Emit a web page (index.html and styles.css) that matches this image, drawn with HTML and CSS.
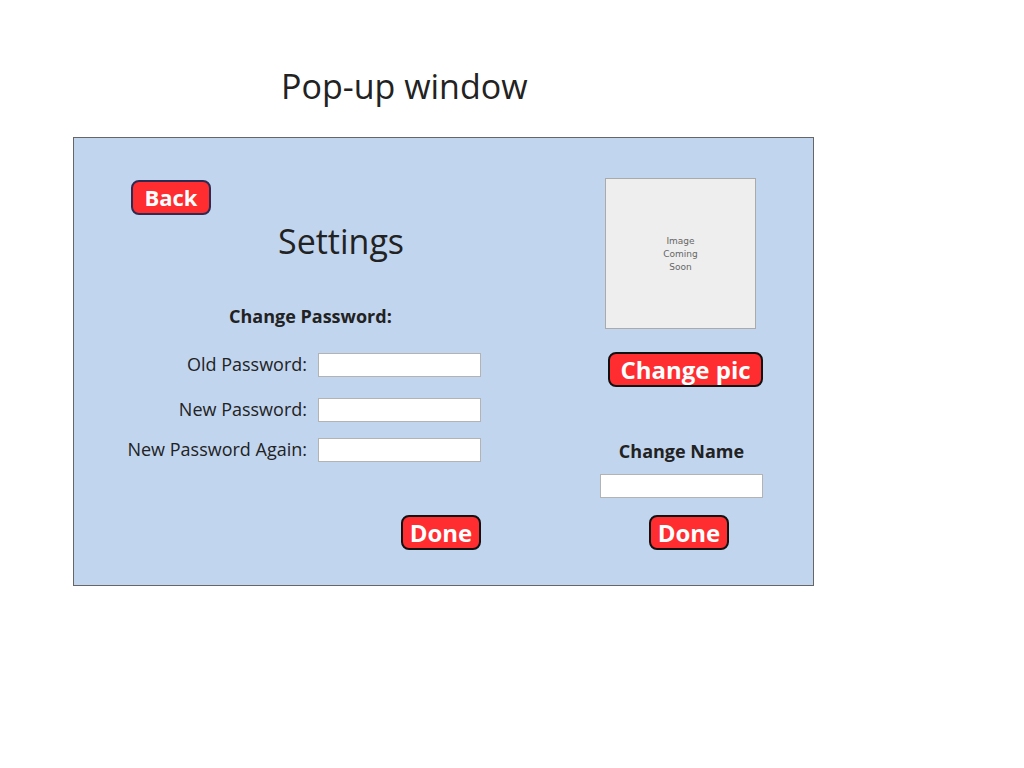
FILE: index.html
```html
<!DOCTYPE html>
<html>
<head>
<meta charset="utf-8">
<title>Pop-up window</title>
<link rel="stylesheet" href="styles.css">
</head>
<body>
<div class="page">
  <h1 class="page-title">Pop-up window</h1>
  <div class="popup">
    <div class="col-left">
      <button class="btn btn-back">Back</button>
      <h2 class="settings-title">Settings</h2>
      <div class="section-label pw-label">Change Password:</div>
      <div class="form">
        <div class="form-row row1">
          <label class="field-label">Old Password:</label>
          <input class="field" type="text">
        </div>
        <div class="form-row row2">
          <label class="field-label">New Password:</label>
          <input class="field" type="text">
        </div>
        <div class="form-row row3">
          <label class="field-label">New Password Again:</label>
          <input class="field" type="text">
        </div>
      </div>
      <button class="btn btn-done done-left">Done</button>
    </div>
    <div class="col-right">
      <div class="image-box"><span>Image<br>Coming<br>Soon</span></div>
      <button class="btn btn-pic">Change pic</button>
      <div class="section-label name-label">Change Name</div>
      <input class="field name-field" type="text">
      <button class="btn btn-done done-right">Done</button>
    </div>
  </div>
</div>
</body>
</html>
```
FILE: styles.css
```css
* { box-sizing: border-box; }
html, body { margin: 0; padding: 0; background: #fff; }
body {
  font-family: "Open Sans", "Liberation Sans", sans-serif;
  color: #222;
}
.page {
  padding-left: 73px;
  padding-top: 66px;
}
.page-title {
  margin: 0 0 31px 208px;
  font-size: 34px;
  font-weight: 400;
  line-height: 40px;
  color: #222;
}
.popup {
  width: 741px;
  height: 449px;
  background: #c1d5ef;
  border: 1px solid #666;
  display: flex;
}
.col-left {
  width: 526px;
  display: flex;
  flex-direction: column;
  align-items: flex-start;
}
.col-right {
  width: 163px;
  display: flex;
  flex-direction: column;
  align-items: flex-start;
}
.btn {
  font-family: "Open Sans", "Liberation Sans", sans-serif;
  font-weight: 700;
  color: #fff;
  background: #ff2d30;
  border: 2px solid #111;
  border-radius: 8px;
  padding: 0;
  height: 35px;
  line-height: 29px;
  font-size: 24px;
  text-align: center;
}
.btn-back {
  margin: 42px 0 0 57px;
  width: 80px;
  font-size: 22px;
  border-color: #2e2a50;
}
.settings-title {
  margin: 6px 0 0 204px;
  font-size: 34px;
  font-weight: 400;
  line-height: 40px;
  color: #222;
}
.section-label {
  font-size: 18px;
  font-weight: 700;
  line-height: 24px;
  color: #222;
}
.pw-label {
  margin: 43px 0 0 155px;
}
.form {
  display: flex;
  flex-direction: column;
}
.form-row {
  display: flex;
  align-items: center;
  gap: 11px;
}
.row1 { margin-top: 25px; }
.row2 { margin-top: 21px; }
.row3 { margin-top: 16px; }
.field-label {
  width: 233px;
  text-align: right;
  font-size: 18px;
  line-height: 22px;
  padding-bottom: 2px;
  color: #222;
}
.field {
  width: 163px;
  height: 24px;
  border: 1px solid #b3b3b3;
  background: #fff;
  margin: 0;
  padding: 0;
}
.btn-done {
  width: 80px;
}
.done-left {
  margin: 53px 0 0 327px;
}
.image-box {
  margin: 40px 0 0 5px;
  width: 151px;
  height: 151px;
  background: #eeeeee;
  border: 1px solid #aaaaaa;
  display: flex;
  align-items: center;
  justify-content: center;
  text-align: center;
  padding-top: 1px;
  font-family: "DejaVu Sans", Verdana, sans-serif;
  font-size: 9px;
  line-height: 13px;
  color: #666;
}
.btn-pic {
  margin: 23px 0 0 8px;
  width: 155px;
}
.name-label {
  margin-top: 52px;
  align-self: center;
}
.name-field {
  margin-top: 11px;
}
.done-right {
  margin: 17px 0 0 49px;
}
```
